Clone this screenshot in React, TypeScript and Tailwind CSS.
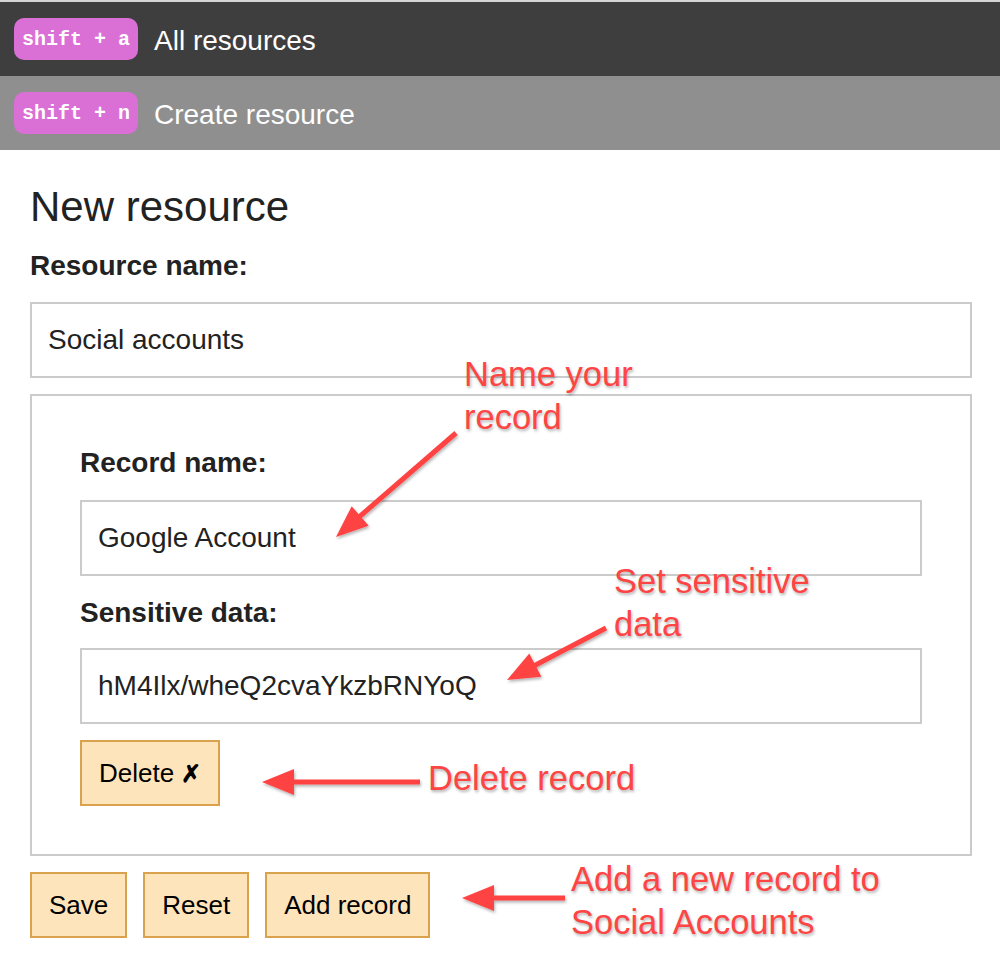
import { useState } from 'react';

const sans = "font-['Liberation_Sans',Arial,sans-serif]";

// punto di partenza (coda) e punta della freccia
const arrows = [
    { x1: 456, y1: 433, x2: 336, y2: 537 },
    { x1: 606, y1: 628, x2: 507, y2: 680 },
    { x1: 420, y1: 782, x2: 262, y2: 782 },
    { x1: 565, y1: 898, x2: 462, y2: 898 },
];

const Arrow = ({ x1, y1, x2, y2 }: { x1: number; y1: number; x2: number; y2: number }) => {
    const len = Math.hypot(x2 - x1, y2 - y1);
    const ux = (x2 - x1) / len;
    const uy = (y2 - y1) / len;
    const headLen = 32;
    const half = 13;
    const bx = x2 - ux * headLen;
    const by = y2 - uy * headLen;
    const pts = `${x2},${y2} ${bx - uy * half},${by + ux * half} ${bx + uy * half},${by - ux * half}`;
    return (
        <g>
            <line x1={x1} y1={y1} x2={bx + ux * 4} y2={by + uy * 4} stroke="#ff4242" strokeWidth={5} />
            <polygon points={pts} fill="#ff4242" />
        </g>
    );
};

const Note = ({ className, lines }: { className: string; lines: string[] }) => (
    <div className={`absolute ${sans} text-[34.5px] leading-[43px] text-[#ff4444] [text-shadow:1px_2px_3px_rgba(0,0,0,0.3)] whitespace-nowrap ${className}`}>
        {lines.map((l) => (
            <div key={l}>{l}</div>
        ))}
    </div>
);

const Badge = ({ keys }: { keys: string }) => (
    <span className="h-[42px] w-[124px] rounded-[10px] bg-[#da70d6] text-white font-['Liberation_Mono','Courier_New',monospace] font-bold text-[20px] flex items-center justify-center whitespace-pre pt-[2px]">
        {keys}
    </span>
);

const Field = ({ value, onChange }: { value: string; onChange: (v: string) => void }) => (
    <input
        value={value}
        onChange={(e) => onChange(e.target.value)}
        className={`block w-full h-[76px] border-2 border-[#cbcbcb] pl-[16px] text-[28px] text-[#222] ${sans} outline-none`}
    />
);

const Btn = ({ children }: { children: React.ReactNode }) => (
    <button className={`h-[66px] px-[17px] bg-[#fee4ba] border-2 border-[#dba24e] text-[26px] leading-none text-black ${sans}`}>
        {children}
    </button>
);

export default function App() {
    const [resource, setResource] = useState('Social accounts');
    const [record, setRecord] = useState('Google Account');
    const [secret, setSecret] = useState('hM4Ilx/wheQ2cvaYkzbRNYoQ');

    return (
        <div className={`relative w-[1000px] h-[960px] bg-white ${sans}`}>
            {/* barra di navigazione */}
            <nav className="border-t-2 border-[#d6d6d6]">
                <div className="h-[74px] bg-[#3e3e3e] flex items-center pl-[14px] gap-4">
                    <Badge keys="shift + a" />
                    <span className="text-white text-[28px] pt-[4px]">All resources</span>
                </div>
                <div className="h-[74px] bg-[#8f8f8f] flex items-center pl-[14px] gap-4">
                    <Badge keys="shift + n" />
                    <span className="text-white text-[28px] pt-[4px]">Create resource</span>
                </div>
            </nav>

            <main className="pl-[30px] pr-[28px]">
                <h1 className="mt-[36px] text-[42px] leading-none text-[#222]">New resource</h1>
                <label className="block mt-[24px] text-[28px] leading-none font-bold text-[#222]">Resource name:</label>
                <div className="mt-[22px]">
                    <Field value={resource} onChange={setResource} />
                </div>

                <div className="mt-[16px] border-2 border-[#cbcbcb] px-[48px] pt-[53px] pb-[48px]">
                    <label className="block text-[28px] leading-none font-bold text-[#222]">Record name:</label>
                    <div className="mt-[23px]">
                        <Field value={record} onChange={setRecord} />
                    </div>
                    <label className="block mt-[23px] text-[28px] leading-none font-bold text-[#222]">Sensitive data:</label>
                    <div className="mt-[21px]">
                        <Field value={secret} onChange={setSecret} />
                    </div>
                    <div className="mt-[16px] flex">
                        <Btn>
                            Delete <span className="text-[24px] font-bold">✗</span>
                        </Btn>
                    </div>
                </div>

                <div className="mt-[16px] flex gap-4">
                    <Btn>Save</Btn>
                    <Btn>Reset</Btn>
                    <Btn>Add record</Btn>
                </div>
            </main>

            {/* annotazioni sovrapposte */}
            <svg className="absolute inset-0 pointer-events-none" width={1000} height={960}>
                <defs>
                    <filter id="sh" x="-20%" y="-20%" width="140%" height="140%">
                        <feDropShadow dx="1" dy="2" stdDeviation="1.5" floodColor="#000" floodOpacity="0.3" />
                    </filter>
                </defs>
                <g filter="url(#sh)">
                    {arrows.map((a, i) => (
                        <Arrow key={i} {...a} />
                    ))}
                </g>
            </svg>
            <Note className="left-[464px] top-[353px]" lines={['Name your', 'record']} />
            <Note className="left-[614px] top-[560px]" lines={['Set sensitive', 'data']} />
            <Note className="left-[428px] top-[757px]" lines={['Delete record']} />
            <Note className="left-[571px] top-[858px]" lines={['Add a new record to', 'Social Accounts']} />
        </div>
    );
}
